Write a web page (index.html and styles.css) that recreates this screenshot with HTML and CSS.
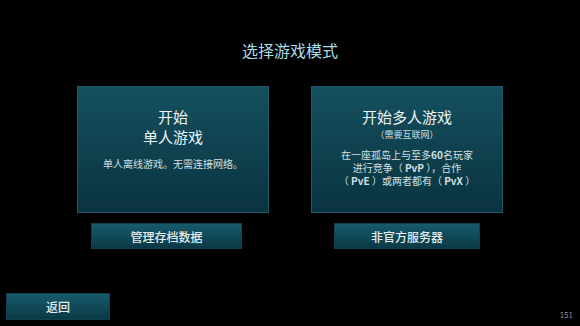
FILE: index.html
```html
<!DOCTYPE html>
<html lang="zh-CN">
<head>
    <meta charset="UTF-8">
    <title>选择游戏模式</title>
    <meta name="viewport" content="width=device-width, initial-scale=1.0">
    <link rel="stylesheet" href="styles.css">
</head>
<body>
    <div class="screen">
        <h1 class="title">选择游戏模式</h1>

        <div class="modes">
            <div class="mode-col">
                <div class="mode-card">
                    <h2>开始<br>单人游戏</h2>
                    <p class="desc">单人离线游戏。无需连接网络。</p>
                </div>
                <button class="btn btn-saves">管理存档数据</button>
            </div>
            <div class="mode-col">
                <div class="mode-card">
                    <h2>开始多人游戏</h2>
                    <p class="note">（需要互联网）</p>
                    <p class="desc">在一座孤岛上与至多<b>60</b>名玩家<br>进行竞争（ <b>PvP</b> ），合作<br>（ <b>PvE</b> ）或两者都有（ <b>PvX</b> ）</p>
                </div>
                <button class="btn btn-servers">非官方服务器</button>
            </div>
        </div>

        <div class="footer">
            <button class="btn btn-back">返回</button>
            <span class="fps">151</span>
        </div>
    </div>
</body>
</html>
```

FILE: styles.css
```css
* {
    box-sizing: border-box;
    font-family: "Noto Sans CJK SC", "Noto Sans", sans-serif;
}

body {
    margin: 0;
    background: #000;
    color: #e6eef0;
}

.screen {
    width: 580px;
    height: 326px;
    display: flex;
    flex-direction: column;
    overflow: hidden;
}

.title {
    margin: 39px 0 0;
    font-size: 16px;
    line-height: 22px;
    font-weight: 400;
    text-align: center;
    color: #a9dde9;
}

.modes {
    display: flex;
    justify-content: center;
    gap: 42px;
    margin-top: 25px;
}

.mode-col {
    width: 192px;
    display: flex;
    flex-direction: column;
}

.mode-card {
    height: 127px;
    padding-top: 20px;
    text-align: center;
    background: linear-gradient(#14505f, #0a3340);
    border: 1px solid #1f5866;
}

.mode-card h2 {
    margin: 0;
    font-size: 15px;
    line-height: 20px;
    font-weight: 400;
    color: #eef4f5;
}

.note {
    margin: 0;
    font-size: 9px;
    line-height: 16px;
    color: #cfdde0;
}

.desc {
    margin: 10px 0 0;
    font-size: 10px;
    line-height: 13px;
    color: #d4e0e3;
}

.desc b {
    display: inline-block;
    line-height: 13px;
    font-weight: 700;
}

.mode-card .note + .desc {
    margin-top: 5px;
}

.btn {
    height: 26px;
    padding: 0;
    font-size: 12px;
    font-weight: 500;
    color: #e4ecee;
    background: linear-gradient(#175b6b, #0b3946);
    border: 1px solid #0e4150;
    cursor: pointer;
}

.btn-saves {
    width: 151px;
    margin: 10px 0 0 14px;
}

.btn-servers {
    width: 146px;
    margin: 10px 0 0 23px;
}

.footer {
    margin-top: auto;
    padding: 0 7px 6px 6px;
    display: flex;
    justify-content: space-between;
    align-items: flex-end;
}

.btn-back {
    width: 104px;
    height: 27px;
}

.fps {
    font-size: 8px;
    line-height: 10px;
    color: #8a9496;
}
```
